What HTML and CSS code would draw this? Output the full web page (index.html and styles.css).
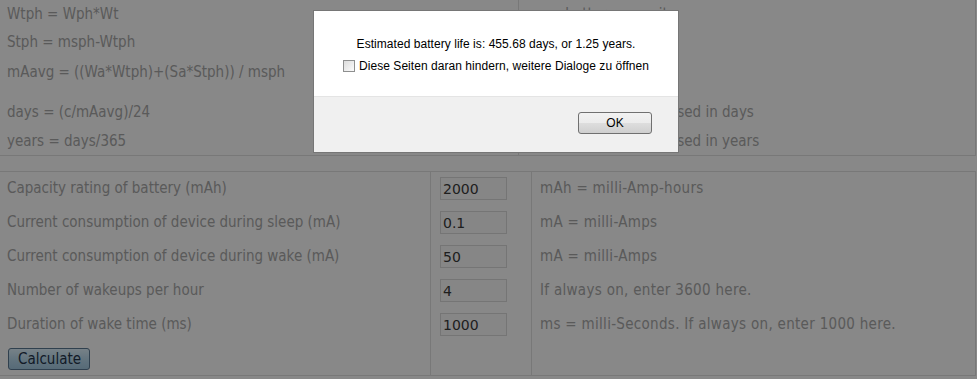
FILE: index.html
```html
<!DOCTYPE html>
<html lang="en">

<head>
    <meta charset="UTF-8">
    <meta name="viewport" content="width=device-width, initial-scale=1.0">
    <title>Battery life calculator</title>
    <link rel="stylesheet" href="styles.css">
</head>

<body>
    <table class="formulas">
        <tr class="r-first">
            <td class="left">Wtph = Wph*Wt</td>
            <td class="right">c = battery capacity</td>
        </tr>
        <tr>
            <td class="left">Stph = msph-Wtph</td>
            <td class="right">msph = 3600000</td>
        </tr>
        <tr>
            <td class="left">mAavg = ((Wa*Wtph)+(Sa*Stph)) / msph</td>
            <td class="right">average mA</td>
        </tr>
        <tr class="r-spacer">
            <td class="left"></td>
            <td class="right"></td>
        </tr>
        <tr>
            <td class="left">days = (c/mAavg)/24</td>
            <td class="right">Battery life is expressed in days</td>
        </tr>
        <tr class="r-last">
            <td class="left">years = days/365</td>
            <td class="right">Battery life is expressed in years</td>
        </tr>
    </table>

    <form class="calc">
        <table class="inputs">
            <tr>
                <td class="label">Capacity rating of battery (mAh)</td>
                <td class="field"><input class="num" type="text" name="c" value="2000"></td>
                <td class="note">mAh = milli-Amp-hours</td>
            </tr>
            <tr>
                <td class="label">Current consumption of device during sleep (mA)</td>
                <td class="field"><input class="num" type="text" name="sa" value="0.1"></td>
                <td class="note">mA = milli-Amps</td>
            </tr>
            <tr>
                <td class="label">Current consumption of device during wake (mA)</td>
                <td class="field"><input class="num" type="text" name="wa" value="50"></td>
                <td class="note">mA = milli-Amps</td>
            </tr>
            <tr>
                <td class="label">Number of wakeups per hour</td>
                <td class="field"><input class="num" type="text" name="wph" value="4"></td>
                <td class="note">If always on, enter 3600 here.</td>
            </tr>
            <tr>
                <td class="label">Duration of wake time (ms)</td>
                <td class="field"><input class="num" type="text" name="wt" value="1000"></td>
                <td class="note">ms = milli-Seconds. If always on, enter 1000 here.</td>
            </tr>
            <tr>
                <td class="label"><input id="btn-calc" type="button" value="Calculate"></td>
                <td class="field"></td>
                <td class="note"></td>
            </tr>
        </table>
    </form>

    <div class="mask"></div>

    <div class="dialog">
        <div class="dialog-body">
            <p class="message">Estimated battery life is: 455.68 days, or 1.25 years.</p>
            <label class="suppress"><input type="checkbox" class="box"> Diese Seiten daran hindern, weitere Dialoge zu öffnen</label>
        </div>
        <div class="dialog-foot">
            <button class="ok">OK</button>
        </div>
    </div>
</body>

</html>
```

FILE: styles.css
```css
body {
    margin: 0;
    background: #fff;
    font-family: "DejaVu Sans Condensed", "DejaVu Sans", sans-serif;
    font-size: 15px;
    color: #a9a9a9;
}

table {
    width: 976px;
    border-collapse: collapse;
}

td {
    padding: 0;
    vertical-align: middle;
    white-space: nowrap;
}

/* formulas block */
.formulas {
    border-right: 1px solid #e2e2e2;
    border-bottom: 1px solid #e2e2e2;
}

.formulas tr {
    height: 30px;
}

.formulas .r-first {
    height: 27px;
}

.formulas .r-last {
    height: 28px;
}

.formulas .r-spacer {
    height: 10px;
}

.formulas .left {
    width: 511px;
    padding-left: 7px;
    border-right: 1px solid #e2e2e2;
}

.formulas .right {
    padding-left: 19px;
}

/* inputs block */
.calc {
    margin-top: 15px;
}

.inputs {
    border-top: 1px solid #e2e2e2;
    border-right: 1px solid #e2e2e2;
    border-bottom: 1px solid #e2e2e2;
}

.inputs tr {
    height: 34px;
}

.inputs .label {
    width: 423px;
    padding-left: 7px;
    border-right: 1px solid #e2e2e2;
}

.inputs .field {
    width: 91px;
    padding-left: 9px;
    border-right: 1px solid #e2e2e2;
}

.inputs .note {
    padding-left: 8px;
    letter-spacing: 0.3px;
}

.num {
    box-sizing: border-box;
    width: 67px;
    height: 23px;
    margin: 0;
    padding: 2px 2px 0;
    border: 1px solid #dcdcdc;
    background: #fbfbfb;
    font-family: "DejaVu Sans", sans-serif;
    font-size: 14px;
    color: #3a3a3a;
}

#btn-calc {
    box-sizing: border-box;
    width: 82px;
    height: 22px;
    margin: 3px 0 0 1px;
    padding: 0 0 0 1px;
    border: 1px solid #5a7892;
    border-radius: 3px;
    background: linear-gradient(#dff2fd, #b7d8ec 55%, #a3c8e0);
    font-family: "DejaVu Sans Condensed", "DejaVu Sans", sans-serif;
    font-size: 15px;
    line-height: 18px;
    color: #24344a;
}

/* dialog over the page */
.mask {
    position: fixed;
    inset: 0;
    background: rgba(0, 0, 0, 0.467);
}

.dialog {
    position: fixed;
    left: 313px;
    top: 10px;
    width: 364px;
    height: 141px;
    border: 1px solid #767676;
    background: #f0f0f0;
    font-family: "Liberation Sans", Arial, sans-serif;
    font-size: 12px;
    color: #000;
    display: flex;
    flex-direction: column;
}

.dialog-body {
    height: 85px;
    background: #fff;
    border-bottom: 1px solid #e4e4e4;
    display: flex;
    flex-direction: column;
    align-items: center;
}

.message {
    margin: 26px 0 0;
    line-height: 14px;
    letter-spacing: 0.05px;
}

.suppress {
    margin-top: 8px;
    display: flex;
    align-items: center;
    line-height: 14px;
    letter-spacing: 0.05px;
}

.box {
    appearance: none;
    box-sizing: border-box;
    width: 12px;
    height: 12px;
    margin: 0 4px 0 0;
    border: 1px solid #8e8f8f;
    background: linear-gradient(135deg, #dcdcdc, #fbfbfb);
}

.dialog-foot {
    flex: 1;
    display: flex;
    justify-content: flex-end;
    align-items: flex-start;
    padding-right: 26px;
}

.ok {
    box-sizing: border-box;
    width: 74px;
    height: 22px;
    margin-top: 15px;
    border: 1px solid #707070;
    border-radius: 3px;
    background: linear-gradient(#f2f2f2, #ebebeb 50%, #dddddd 51%, #cfcfcf);
    font-family: "Liberation Sans", Arial, sans-serif;
    font-size: 12px;
    color: #000;
}
```
